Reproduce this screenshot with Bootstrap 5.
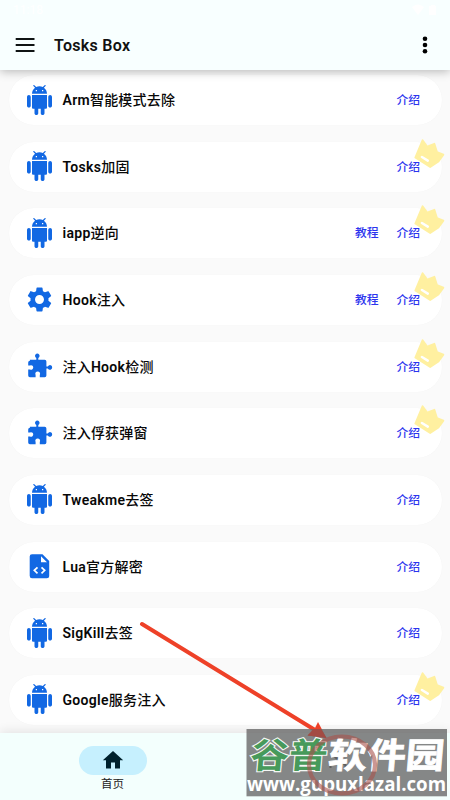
<!DOCTYPE html>
<html lang="zh-CN">
<head>
<meta charset="utf-8">
<meta name="viewport" content="width=device-width, initial-scale=1">
<title>Tosks Box</title>
<link href="https://cdn.jsdelivr.net/npm/bootstrap@5.3.0/dist/css/bootstrap.min.css" rel="stylesheet">
<style>
html, body { height: 100%; overflow: hidden; }
body { background: #fafafa; font-family: Roboto, "Noto Sans CJK SC", sans-serif; color: #111; }
.screen { width: 450px; height: 800px; }
.top-bar { height: 70px; background: #f8ffff; box-shadow: 0 2px 9px rgba(0,0,0,.25); z-index: 2; }
.status { height: 20px; color: #fff; font-size: 12px; padding: 0 12px 0 13px; line-height: 20px; }
.tools { height: 50px; padding: 0 13px; }
.app-title { font-size: 16px; font-weight: 600; letter-spacing: .3px; line-height: 20px; margin-left: 17px; padding-top: 2px; }
.tool-list { padding: 5px 8.5px 0; gap: 16.67px; height: 663px; }
.tool-row { height: 50px; flex: none; border-radius: 25px; background: #fff; padding: 0 21.5px 0 15.5px; box-shadow: 0 0 1px rgba(0,0,0,.05); }
.tool-icon { width: 30px; height: 30px; fill: #1268e3; margin-right: 8.5px; margin-top: -1px; flex: none; }
.tool-name { font-size: 14px; font-weight: 500; letter-spacing: .2px; line-height: 20px; color: #080808; }
.tool-name b { font-weight: 600; letter-spacing: .3px; }
.tool-links { gap: 17.8px; }
.tool-links a { font-size: 11.8px; font-weight: 500; line-height: 16px; color: #2c35ee; }
.crown { width: 31px; height: 30px; right: -3px; top: -3px; }
.bottom-bar { height: 67px; background: #f3fffd; box-shadow: 0 -2px 10px rgba(0,0,0,.09); z-index: 2; }
.nav-cell { padding-top: 12.5px; }
.pill { width: 68px; height: 29px; border-radius: 15px; background: #c6f0fe; }
.pill-plain { background: none; }
.nav-text { font-size: 11.5px; line-height: 16px; color: #222; margin-top: 1px; }
.overlay { left: 0; top: 0; z-index: 5; pointer-events: none; }
.logo-text { font: 700 35px "Noto Sans CJK SC", sans-serif; }
.site-text { font: 700 20px "Open Sans", sans-serif; }
</style>
<script src="https://cdn.jsdelivr.net/npm/bootstrap@5.3.0/dist/js/bootstrap.bundle.min.js"></script>
</head>
<body>
<svg class="d-none">
  <symbol id="android" viewBox="-.4 0 24 24"><path d="M6 18c0 .55.45 1 1 1h1v3.5c0 .83.67 1.5 1.5 1.5s1.5-.67 1.5-1.5V19h2v3.5c0 .83.67 1.5 1.5 1.5s1.5-.67 1.5-1.5V19h1c.55 0 1-.45 1-1V8H6v10zM3.5 8C2.67 8 2 8.67 2 9.5v7c0 .83.67 1.5 1.5 1.5S5 17.33 5 16.5v-7C5 8.67 4.33 8 3.5 8zm17 0c-.83 0-1.5.67-1.5 1.5v7c0 .83.67 1.5 1.5 1.5s1.5-.67 1.5-1.5v-7c0-.83-.67-1.5-1.5-1.5zm-4.97-5.84l1.3-1.3c.2-.2.2-.51 0-.71-.2-.2-.51-.2-.71 0l-1.48 1.48C13.85 1.23 12.95 1 12 1c-.96 0-1.86.23-2.66.63L7.85.15c-.2-.2-.51-.2-.71 0-.2.2-.2.51 0 .71l1.31 1.31C6.97 3.26 6 5.01 6 7h12c0-1.99-.97-3.75-2.47-4.84zM10 5H9V4h1v1zm5 0h-1V4h1v1z"/></symbol>
  <symbol id="gear" viewBox="-.4 -.4 24 24"><path d="M19.14 12.94c.04-.3.06-.61.06-.94 0-.32-.02-.64-.07-.94l2.03-1.58c.18-.14.23-.41.12-.61l-1.92-3.32c-.12-.22-.37-.29-.59-.22l-2.39.96c-.5-.38-1.03-.7-1.62-.94L14.4 2.81c-.04-.24-.24-.41-.48-.41h-3.84c-.24 0-.43.17-.47.41l-.36 2.54c-.59.24-1.13.57-1.62.94l-2.39-.96c-.22-.08-.47 0-.59.22L2.740 8.870c-.12.21-.08.47.12.61l2.03 1.580c-.05.3-.09.63-.09.94s.02.64.07.94l-2.030 1.580c-.18.14-.23.41-.12.61l1.920 3.320c.12.22.37.29.59.22l2.390-.96c.5.38 1.030.7 1.620.94l.36 2.540c.05.24.24.41.48.41h3.840c.24 0 .44-.17.47-.41l.36-2.540c.59-.24 1.130-.56 1.620-.94l2.390.96c.22.08.47 0 .59-.22l1.920-3.320c.12-.22.07-.47-.12-.61l-2.010-1.580zM12 15.600c-1.980 0-3.600-1.620-3.600-3.600s1.620-3.600 3.600-3.600 3.600 1.620 3.600 3.600-1.620 3.600-3.600 3.600z"/></symbol>
  <symbol id="puzzle" viewBox="-.3 0 30 30"><path d="M5.600 8.700H12V6.900a2.300 2.300 0 1 1 2 0v1.800h6.400q1.700 0 1.700 1.700v5h1.400a2.300 2.300 0 1 1 0 2h-1.400v7.200q0 1.700-1.700 1.700h-4.900v-2.300a2.400 2.400 0 1 0-4.200 0v2.300H5.600q-1.700 0-1.700-1.700v-6h1.800a2.300 2.300 0 1 0 0-4.200H3.900v-3q0-1.700 1.700-1.700z"/></symbol>
  <symbol id="codefile" viewBox="-.5 -.3 30 30"><path fill-rule="evenodd" d="M7.500 3h10.500l6.700 6.700V24.500q0 2.500-2.500 2.500H7.500Q5.200 27 5.200 24.500V5.300Q5.200 3 7.500 3zM16.500 5v6h6z"/><path d="M13 16l-3.200 3 3.200 3M17 16l3.200 3-3.200 3" fill="none" stroke="#fff" stroke-width="1.700"/></symbol>
  <symbol id="crownmark" viewBox="0 0 31 30"><path d="M8.600 1.200 13.200 7.600 20.400 4.800 23 13 29.400 15.700 24.500 22.600 16.200 28 1.300 18.500z" fill="#fff0a0" stroke="#fff0a0" stroke-width="1.800" stroke-linejoin="round"/><path d="M7.900 18l5.900 3.600" stroke="#fff" stroke-width="2.500" stroke-linecap="round"/></symbol>
</svg>
<div class="screen position-relative d-flex flex-column overflow-hidden">
  <header class="top-bar position-relative flex-shrink-0">
    <div class="status d-flex align-items-center justify-content-between">
      <span>11:18</span>
      <svg width="26" height="12" fill="#fff"><path d="M0 3q6-5 12 0L6 11zM17 2h2V1h4v1h1v9h-7z"/></svg>
    </div>
    <div class="tools d-flex align-items-center">
      <svg width="24" height="24" viewBox="0 0 24 24"><path d="M2.700 6h18.800M2.700 12h18.800M2.700 18h18.800" stroke="#101414" stroke-width="2.200"/></svg>
      <span class="app-title">Tosks Box</span>
      <svg class="ms-auto" width="24" height="24" viewBox="0 0 24 24"><circle cx="12" cy="5.800" r="2.300"/><circle cx="12" cy="12" r="2.300"/><circle cx="12" cy="18.200" r="2.300"/></svg>
    </div>
  </header>
  <main class="tool-list d-flex flex-column flex-shrink-0" id="tools"></main>
  <footer class="bottom-bar position-relative row g-0 flex-shrink-0">
    <div class="nav-cell col-6 d-flex flex-column align-items-center">
      <div class="pill d-flex align-items-center justify-content-center">
        <svg width="24" height="24" viewBox="0 0 24 24" fill="#00212d"><path d="M10 20.500v-6h4v6h5v-8.300h3.200L12 3 1.800 12.200H5v8.300z"/></svg>
      </div>
      <span class="nav-text">首页</span>
    </div>
    <div class="nav-cell col-6 d-flex flex-column align-items-center">
      <div class="pill pill-plain d-flex align-items-center justify-content-center">
        <svg width="24" height="24" viewBox="0 0 24 24" fill="none" stroke="#333" stroke-width="2"><circle cx="12" cy="7" r="3.500"/><path d="M4.500 20v-3q7.500-5 15 0v3"/></svg>
      </div>
    </div>
  </footer>
  <svg class="overlay position-absolute" width="450" height="800">
    <path d="M142 624L315 730" stroke="#ee4128" stroke-width="4" stroke-linecap="round"/>
    <path d="M318 722L326.500 738 307.500 735.500 314 730z" fill="#ee4128"/>
    <rect x="246.500" y="729" width="200.500" height="67.300" fill="#696969" fill-opacity=".8"/>
    <path d="M313.500 729h7.500l5.500 9-19-2.500z" fill="#a34b43"/>
    <g transform="translate(249.500 767.800) skewX(-5)" class="logo-text">
      <text x="0" y="0" textLength="77" lengthAdjust="spacingAndGlyphs" fill="#479a5b" stroke="#f4f7f4" stroke-width="2.200" paint-order="stroke">谷普</text>
      <text x="78" y="0" textLength="116" lengthAdjust="spacingAndGlyphs" fill="#fff" stroke="#fff" stroke-width=".8">软件园</text>
    </g>
    <text class="site-text" x="247" y="790.500" textLength="199" lengthAdjust="spacingAndGlyphs" fill="#fff">www.gupuxlazal.com</text>
    <ellipse cx="342" cy="765" rx="33" ry="28.500" fill="none" stroke="#a9524b" stroke-opacity=".6" stroke-width="4.200"/>
  </svg>
</div>
<script>
const tools = [
  ['android', 'Arm智能模式去除', 0, 0], ['android', 'Tosks加固', 0, 1], ['android', 'iapp逆向', 1, 1],
  ['gear', 'Hook注入', 1, 1], ['puzzle', '注入Hook检测', 0, 1], ['puzzle', '注入俘获弹窗', 0, 1],
  ['android', 'Tweakme去签', 0, 0], ['codefile', 'Lua官方解密', 0, 0], ['android', 'SigKill去签', 0, 0],
  ['android', 'Google服务注入', 0, 1]
];
document.getElementById('tools').innerHTML = tools.map(([icon, name, guide, crown]) => `
  <div class="tool-row position-relative d-flex align-items-center">
    <svg class="tool-icon"><use href="#${icon}"/></svg>
    <span class="tool-name">${name.replace(/[A-Za-z]+/g, '<b>$&</b>')}</span>
    <div class="tool-links d-flex ms-auto">${guide ? '<a class="text-decoration-none">教程</a>' : ''}<a class="text-decoration-none">介绍</a></div>
    ${crown ? '<svg class="crown position-absolute"><use href="#crownmark"/></svg>' : ''}
  </div>`).join('');
</script>
</body>
</html>
